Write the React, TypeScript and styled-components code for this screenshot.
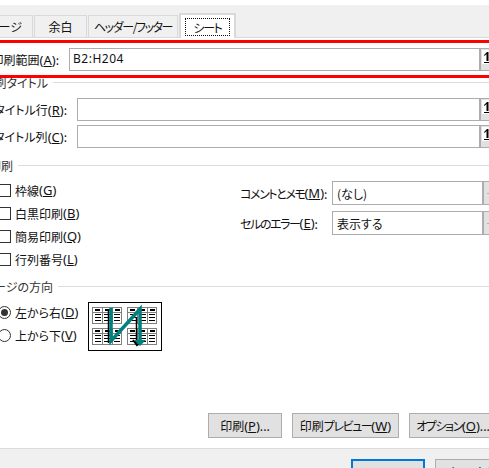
import React from "react";
import styled, { createGlobalStyle } from "styled-components";

const GlobalStyle = createGlobalStyle`
  html, body {
    margin: 0;
    padding: 0;
    background: #fff;
  }
`;

const Dialog = styled.div`
  width: 489px;
  height: 468px;
  overflow: hidden;
  display: flex;
  flex-direction: column;
  background: #fff;
  color: #111;
  font-family: "Noto Sans CJK JP", "Noto Sans", sans-serif;
  font-size: 12px;
  font-feature-settings: "palt";
`;

const Narrow = styled.span`
  letter-spacing: -1.4px;
`;

const Mnemonic = styled.span`
  font-family: "Noto Sans", sans-serif;
  font-size: 13px;
`;

const TabStrip = styled.div`
  flex: none;
  box-sizing: border-box;
  height: 33px;
  margin-top: 5px;
  padding-top: 10px;
  display: flex;
  align-items: stretch;
  background: #f0f0f0;
  border-bottom: 1px solid #d9d9d9;
`;

const Tab = styled.div<{ $width: number; $clipped?: boolean }>`
  width: ${p => p.$width}px;
  box-sizing: border-box;
  margin-right: 1px;
  display: flex;
  align-items: center;
  justify-content: ${p => (p.$clipped ? "flex-end" : "center")};
  padding-right: ${p => (p.$clipped ? "10px" : "0")};
  overflow: hidden;
  white-space: nowrap;
  border: 1px solid #d9d9d9;
  border-bottom: none;
  border-left-width: ${p => (p.$clipped ? 0 : 1)}px;
`;

const ActiveTab = styled.div`
  width: 57px;
  height: 25px;
  margin-top: -2px;
  align-self: flex-start;
  box-sizing: border-box;
  display: flex;
  align-items: center;
  justify-content: center;
  background: #fff;
  border: 2px solid #d9d9d9;
  border-bottom: none;
`;

const FocusText = styled.span`
  width: 45px;
  height: 18px;
  margin-top: 1px;
  display: flex;
  align-items: center;
  justify-content: center;
  outline: 1px dotted #111;
  outline-offset: -1px;
`;

const Highlight = styled.div`
  flex: none;
  margin-top: 2px;
  height: 38px;
  box-sizing: border-box;
  border-top: 3px solid #f00;
  border-bottom: 3px solid #f00;
  padding-top: 5px;
`;

const Body = styled.div`
  flex: none;
  display: flex;
  flex-direction: column;
`;

const FieldRow = styled.div<{ $labelWidth: number; $top?: number }>`
  flex: none;
  display: grid;
  grid-template-columns: ${p => p.$labelWidth}px 1fr 10px;
  align-items: stretch;
  height: 23px;
  margin-top: ${p => p.$top ?? 0}px;
`;

const FieldLabel = styled.label`
  display: flex;
  align-items: center;
  justify-content: flex-end;
  overflow: hidden;
  white-space: nowrap;
  padding-right: 10px;
`;

const TextBox = styled.div`
  box-sizing: border-box;
  border: 1px solid #adadad;
  border-right: none;
  display: flex;
  align-items: center;
  padding: 0 0 2px 3px;
  font-family: "Noto Sans", sans-serif;
  letter-spacing: 0.5px;
`;

const RefButton = styled.div`
  box-sizing: border-box;
  border: 1px solid #adadad;
  border-width: 1px 0 1px 2px;
  background: #e1e1e1;
  padding: 1px 0 0 1px;
`;

const RefFace = styled.div`
  height: 14px;
  background: #fff;
  display: flex;
  justify-content: flex-end;
`;

const SectionTitle = styled.div<{ $top: number }>`
  flex: none;
  display: flex;
  align-items: center;
  height: 15px;
  margin-top: ${p => p.$top}px;
  color: #333;
  &::after {
    content: "";
    flex: 1;
    height: 1px;
    background: #dcdcdc;
    margin-left: 5px;
  }
`;

const SectionText = styled.span<{ $width: number }>`
  width: ${p => p.$width}px;
  display: flex;
  justify-content: flex-end;
  overflow: hidden;
  white-space: nowrap;
`;

const PrintColumns = styled.div`
  flex: none;
  display: flex;
  margin-top: 8px;
  height: 98px;
`;

const CheckColumn = styled.div`
  width: 240px;
  flex: none;
  display: flex;
  flex-direction: column;
  gap: 5px;
`;

const OptionRow = styled.div`
  display: flex;
  align-items: center;
  height: 18px;
  white-space: nowrap;
`;

const CheckBox = styled.span`
  width: 13px;
  height: 13px;
  box-sizing: border-box;
  flex: none;
  margin-left: -2px;
  margin-right: 4px;
  border: 1px solid #333;
  background: #fff;
`;

const SelectColumn = styled.div`
  flex: 1;
  display: flex;
  flex-direction: column;
  gap: 6px;
`;

const SelectRow = styled.div`
  display: grid;
  grid-template-columns: 92px 151px 6px;
  height: 24px;
`;

const SelectLabel = styled.label`
  display: flex;
  align-items: center;
  white-space: nowrap;
`;

const SelectBox = styled.div`
  box-sizing: border-box;
  border: 1px solid #adadad;
  display: flex;
  align-items: center;
  padding-left: 4px;
`;

const SelectArrow = styled.div`
  box-sizing: border-box;
  border: 1px solid #adadad;
  border-width: 1px 0 1px 1px;
  background: #e1e1e1;
  display: flex;
  align-items: center;
  padding-left: 3px;
`;

const DirectionRow = styled.div`
  flex: none;
  display: flex;
  align-items: flex-start;
  margin-top: 8px;
`;

const RadioColumn = styled.div`
  width: 88px;
  flex: none;
  display: flex;
  flex-direction: column;
  gap: 5px;
  padding-top: 1px;
`;

const Radio = styled.span<{ $checked?: boolean }>`
  width: 13px;
  height: 13px;
  box-sizing: border-box;
  flex: none;
  margin-left: -2px;
  margin-right: 4px;
  border: 1px solid #333;
  border-radius: 50%;
  display: flex;
  align-items: center;
  justify-content: center;
  &::after {
    content: "";
    width: 7px;
    height: 7px;
    border-radius: 50%;
    background: ${p => (p.$checked ? "#333" : "transparent")};
  }
`;

const OrderPreview = styled.div`
  width: 74px;
  height: 49px;
  box-sizing: border-box;
  border: 1px solid #000;
  background: #fff;
`;

const ButtonRow = styled.div`
  flex: none;
  display: flex;
  gap: 10px;
  margin-top: 62px;
  padding-left: 208px;
`;

const ActionButton = styled.div<{ $width: number }>`
  width: ${p => p.$width}px;
  height: 25px;
  flex: none;
  box-sizing: border-box;
  border: 1px solid #adadad;
  background: #e1e1e1;
  display: flex;
  align-items: center;
  justify-content: center;
  white-space: nowrap;
`;

const Footer = styled.div`
  flex: none;
  height: 40px;
  margin-top: 10px;
  display: flex;
  gap: 10px;
  padding: 10px 0 0 351px;
  background: #f0f0f0;
  border-top: 1px solid #dcdcdc;
`;

const FooterButton = styled.div<{ $primary?: boolean }>`
  width: 74px;
  height: 25px;
  flex: none;
  box-sizing: border-box;
  border: ${p => (p.$primary ? "2px solid #0078d7" : "1px solid #adadad")};
  background: #e1e1e1;
  display: flex;
  align-items: center;
  justify-content: center;
  white-space: nowrap;
`;

const Key = ({ k }: { k: string }) => (
  <Mnemonic>
    (<u>{k}</u>)
  </Mnemonic>
);

const RefIcon = () => (
  <svg width="5" height="14" viewBox="0 0 5 14">
    <path d="M0 5 L3 2 H4.5 V11 H2.5 V4 L0.5 6" fill="#000" />
    <rect x="0" y="12" width="5" height="1" fill="#000" />
  </svg>
);

const ChevronIcon = () => (
  <svg width="6" height="5" viewBox="0 0 6 5">
    <path d="M0 1 L3 4 L6 1" stroke="#555" strokeWidth="1" fill="none" />
  </svg>
);

const MiniSheet = ({ x, y }: { x: number; y: number }) => (
  <g transform={`translate(${x} ${y})`}>
    <rect x="0.5" y="0.5" width="29" height="16" fill="#fff" stroke="#808080" />
    <path d="M0 5.5H30 M10.5 0V17 M20.5 0V17" stroke="#808080" />
    <path d="M3 3H8 M13 3H18 M23 3H28" stroke="#000" strokeWidth="2" />
    {[7.5, 10.5, 13.5].map(r => (
      <path key={r} d={`M3 ${r}H9 M12 ${r}H19 M22 ${r}H28`} stroke="#000" />
    ))}
  </g>
);

const OrderDiagram = () => (
  <svg width="72" height="47" viewBox="0 0 72 47" style={{ display: "block" }}>
    <MiniSheet x={3} y={4} />
    <MiniSheet x={38} y={4} />
    <MiniSheet x={3} y={25} />
    <MiniSheet x={38} y={25} />
    <path d="M19.5 6V40" stroke="#000" strokeWidth="1.5" fill="none" />
    <path d="M47.5 14V40" stroke="#000" strokeWidth="1.5" fill="none" />
    <path d="M44 37 L48 42 L52 39" stroke="#000" strokeWidth="2" fill="none" />
    <path d="M22 5V38 L51 6 V38" stroke="#007f7f" strokeWidth="3.5" fill="none" />
    <path d="M45 37H57 L51 43Z" fill="#007f7f" />
  </svg>
);

const App = () => {
  return (
    <>
      <GlobalStyle />
      <Dialog>
        <TabStrip>
          <Tab $width={33} $clipped>ページ</Tab>
          <Tab $width={53}>余白</Tab>
          <Tab $width={90}><Narrow>ヘッダー/フッター</Narrow></Tab>
          <ActiveTab>
            <FocusText><Narrow>シート</Narrow></FocusText>
          </ActiveTab>
        </TabStrip>
        <Body>
          <Highlight>
            <FieldRow $labelWidth={69}>
              <FieldLabel>印刷範囲<Key k="A" />:</FieldLabel>
              <TextBox>B2:H204</TextBox>
              <RefButton><RefFace><RefIcon /></RefFace></RefButton>
            </FieldRow>
          </Highlight>
          <SectionTitle $top={-3}>
            <SectionText $width={48}>印刷タイトル</SectionText>
          </SectionTitle>
          <FieldRow $labelWidth={77} $top={8}>
            <FieldLabel>タイトル行<Key k="R" />:</FieldLabel>
            <TextBox />
            <RefButton><RefFace><RefIcon /></RefFace></RefButton>
          </FieldRow>
          <FieldRow $labelWidth={77} $top={4}>
            <FieldLabel>タイトル列<Key k="C" />:</FieldLabel>
            <TextBox />
            <RefButton><RefFace><RefIcon /></RefFace></RefButton>
          </FieldRow>
          <SectionTitle $top={10}>
            <SectionText $width={13}>印刷</SectionText>
          </SectionTitle>
          <PrintColumns>
            <CheckColumn>
              <OptionRow><CheckBox />枠線<Key k="G" /></OptionRow>
              <OptionRow><CheckBox />白黒印刷<Key k="B" /></OptionRow>
              <OptionRow><CheckBox />簡易印刷<Key k="Q" /></OptionRow>
              <OptionRow><CheckBox />行列番号<Key k="L" /></OptionRow>
            </CheckColumn>
            <SelectColumn>
              <SelectRow>
                <SelectLabel><Narrow>コメントとメモ</Narrow><Key k="M" />:</SelectLabel>
                <SelectBox>(なし)</SelectBox>
                <SelectArrow><ChevronIcon /></SelectArrow>
              </SelectRow>
              <SelectRow>
                <SelectLabel><Narrow>セルのエラー</Narrow><Key k="E" />:</SelectLabel>
                <SelectBox>表示する</SelectBox>
                <SelectArrow><ChevronIcon /></SelectArrow>
              </SelectRow>
            </SelectColumn>
          </PrintColumns>
          <SectionTitle $top={0}>
            <SectionText $width={53}>ページの方向</SectionText>
          </SectionTitle>
          <DirectionRow>
            <RadioColumn>
              <OptionRow><Radio $checked />左から右<Key k="D" /></OptionRow>
              <OptionRow><Radio />上から下<Key k="V" /></OptionRow>
            </RadioColumn>
            <OrderPreview><OrderDiagram /></OrderPreview>
          </DirectionRow>
          <ButtonRow>
            <ActionButton $width={74}>印刷<Key k="P" />...</ActionButton>
            <ActionButton $width={107}>印刷<Narrow>プレビュー</Narrow><Key k="W" /></ActionButton>
            <ActionButton $width={88}><Narrow>オプション</Narrow><Key k="O" />...</ActionButton>
          </ButtonRow>
          <Footer>
            <FooterButton $primary>OK</FooterButton>
            <FooterButton><Narrow>キャンセル</Narrow></FooterButton>
          </Footer>
        </Body>
      </Dialog>
    </>
  );
};

export default App;
